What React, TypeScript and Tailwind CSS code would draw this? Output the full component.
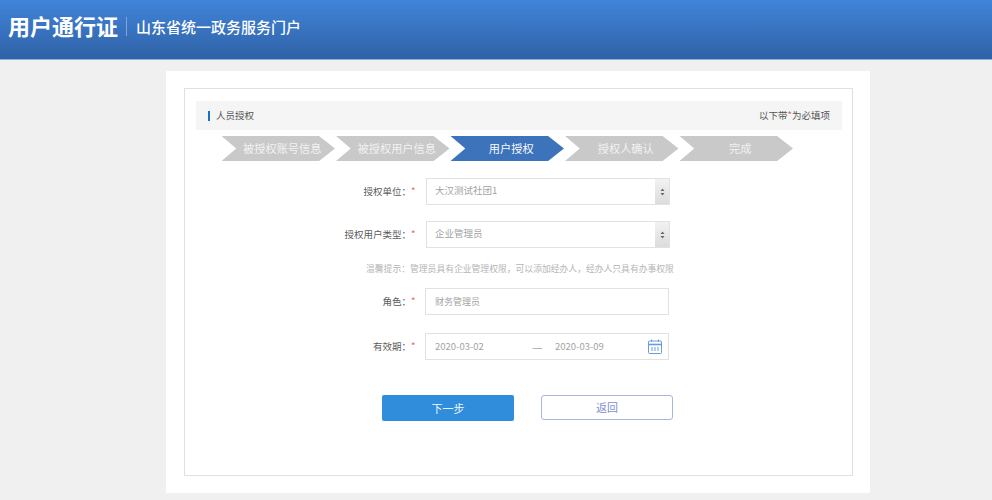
import React from "react";

const steps = [
  { t: "被授权账号信息", on: false },
  { t: "被授权用户信息", on: false },
  { t: "用户授权", on: true },
  { t: "授权人确认", on: false },
  { t: "完成", on: false },
];

function Stepper() {
  return (
    <div className="mt-[6px] ml-[25.5px] flex h-[25px] gap-[1px]">
      {steps.map((s) => (
        <div
          key={s.t}
          className={
            "flex h-[25px] w-[113.5px] items-center justify-center pl-[8px] text-[11.2px] [clip-path:polygon(0_0,86%_0,100%_50%,86%_100%,0_100%,13%_50%)] " +
            (s.on ? "bg-[#3d73bb] text-[#f7f9fc]" : "bg-[#c9c9c9] text-[#f2f2f2]")
          }
        >
          {s.t}
        </div>
      ))}
    </div>
  );
}

function Label({ children }: { children: React.ReactNode }) {
  return (
    <div className="flex w-[242px] shrink-0 justify-end pr-[10px] text-[9.5px] text-[#5c5c5c]">
      <span>{children}：</span>
      <span className="w-[5px] pr-[1px] text-[#e2606a]">*</span>
    </div>
  );
}

function Arrows() {
  return (
    <div className="flex h-full w-[14px] items-center justify-center bg-gradient-to-b from-[#f2f2f2] to-[#dcdcdc]">
      <svg width="5" height="8" viewBox="0 0 5 8" fill="#666666">
        <path d="M2.5 0.5 L4.5 3 H0.5 Z" />
        <path d="M2.5 7.5 L4.5 5 H0.5 Z" />
      </svg>
    </div>
  );
}

function Select({ value }: { value: string }) {
  return (
    <div className="flex h-[27px] w-[244px] items-center justify-between border border-[#e2e2e2] bg-white pl-[8px] text-[9.5px] text-[#a3a3a3]">
      <span className="pb-[2px]">{value}</span>
      <Arrows />
    </div>
  );
}

function Calendar() {
  return (
    <svg width="14" height="15" viewBox="0 0 14 15" fill="none" stroke="#6a9bdc" strokeWidth="1">
      <rect x="0.5" y="2" width="13" height="12.5" rx="1" />
      <path d="M0.5 5.5 H13.5" strokeWidth="1.6" />
      <path d="M3.5 0.5 V3 M10.5 0.5 V3" />
      <path d="M4 8 V12 M7 8 V12 M10 8 V12" />
    </svg>
  );
}

export default function App() {
  return (
    <div
      className="h-[500px] w-[992px] overflow-hidden bg-[#f0f0f0]"
      style={{ fontFamily: '"Noto Sans CJK SC", "Noto Sans", sans-serif' }}
    >
      <header className="flex h-[60px] items-center border-b border-[#8fb0da] bg-gradient-to-b from-[#4184da] to-[#2f62a6] pb-[6px] pl-[8px] text-white">
        <span className="mb-[3px] text-[22px] leading-none font-bold">用户通行证</span>
        <span className="mr-[9px] ml-[8px] h-[19px] w-px bg-[#7fa6dc]" />
        <span className="text-[15px] leading-none font-medium">山东省统一政务服务门户</span>
      </header>

      <main className="mt-[11px] ml-[166px] h-[422px] w-[704px] bg-white pt-[17px] pl-[18px]">
        <div className="h-[388px] w-[669px] border border-[#e0e0e0] pt-[12px] pl-[11px]">
          <div className="flex h-[29px] w-[646px] items-center justify-between bg-[#f5f5f5] pr-[12px] pl-[12px] text-[9.5px] text-[#555555]">
            <div className="flex items-center">
              <span className="mr-[6px] h-[10px] w-[2px] bg-[#1f6fc0]" />
              人员授权
            </div>
            <div>
              以下带<span className="text-[#e2606a]">*</span>为必填项
            </div>
          </div>

          <Stepper />

          <div className="mt-[17px]">
            <div className="flex items-center -ml-[12px]">
              <Label>授权单位</Label>
              <Select value="大汉测试社团1" />
            </div>
            <div className="mt-[16px] flex items-center -ml-[12px]">
              <Label>授权用户类型</Label>
              <Select value="企业管理员" />
            </div>
            <div className="mt-[14px] ml-[170px] text-[8.8px] leading-[13px] text-[#b5b5b5]">
              温馨提示：管理员具有企业管理权限，可以添加经办人，经办人只具有办事权限
            </div>
            <div className="mt-[13px] flex items-center -ml-[12px]">
              <Label>角色</Label>
              <div className="-ml-[1px] flex h-[27px] w-[244px] items-center border border-[#e2e2e2] bg-white pl-[9px] text-[9px] text-[#a3a3a3]">
                财务管理员
              </div>
            </div>
            <div className="mt-[18px] flex items-center -ml-[12px]">
              <Label>有效期</Label>
              <div className="-ml-[1px] flex h-[27px] w-[244px] items-center border border-[#e2e2e2] bg-white pr-[6px] pl-[9px] text-[9.5px] text-[#a3a3a3]">
                <span className="w-[97px]">2020-03-02</span>
                <span className="w-[23px] text-[12px] leading-none">—</span>
                <span>2020-03-09</span>
                <span className="ml-auto flex"><Calendar /></span>
              </div>
            </div>
          </div>

          <div className="mt-[35px] ml-[186px] flex gap-[27px]">
            <button className="h-[26px] w-[132px] rounded-[2px] bg-[#2f8ddc] text-[11px] text-[#f2f8fd]">下一步</button>
            <button className="h-[25px] w-[132px] rounded-[3px] border-[1.5px] border-[#aab4e4] bg-white text-[11px] text-[#7e8fd0]">返回</button>
          </div>
        </div>
      </main>
    </div>
  );
}
